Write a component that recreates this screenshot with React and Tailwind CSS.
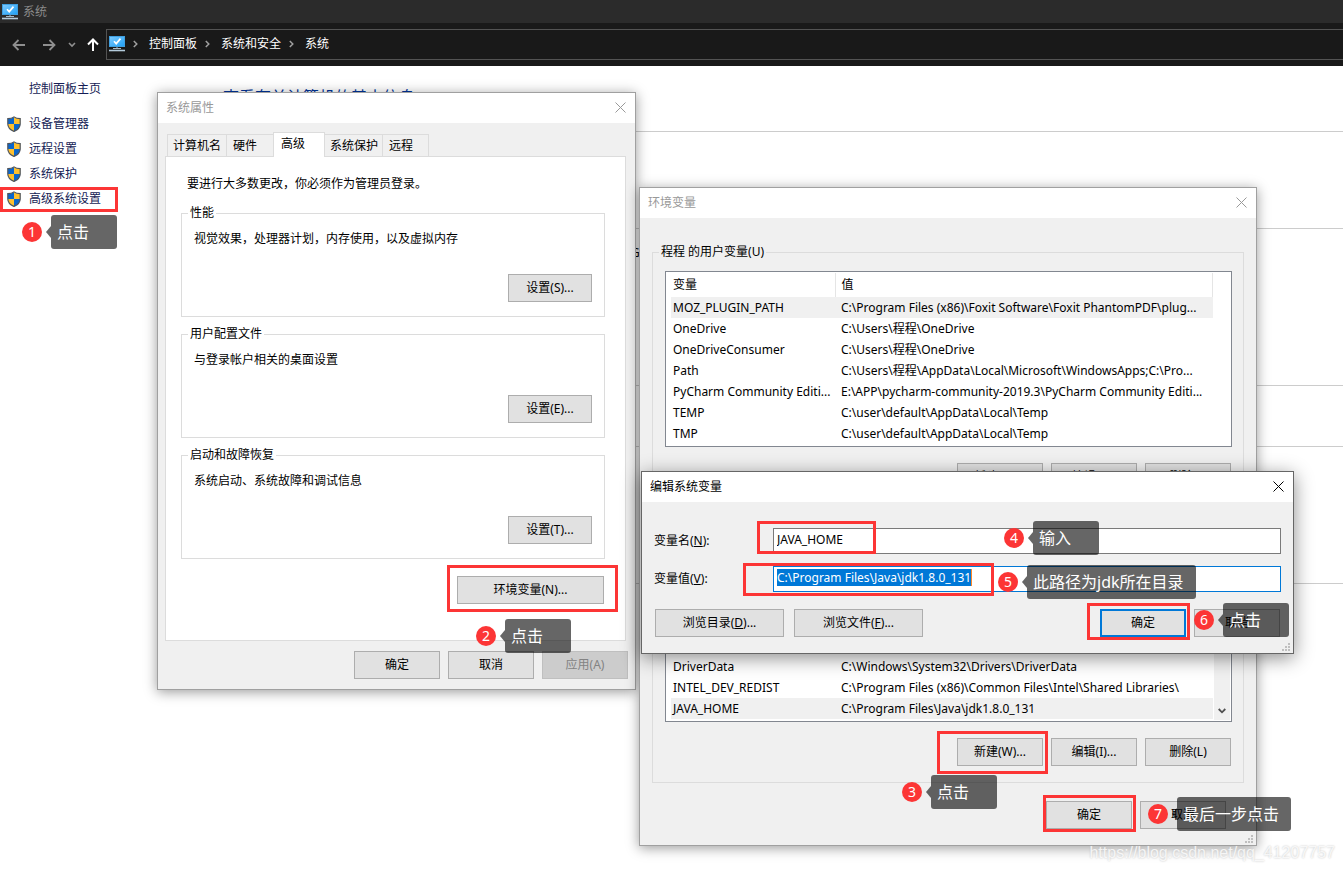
import React, { useState } from 'react';

const SIDE_LINKS = ['设备管理器', '远程设置', '系统保护', '高级系统设置'];

const CRUMBS = ['控制面板', '系统和安全', '系统'];

const TABS = [
    { label: '计算机名', className: 'h-[22px] w-[59px] border-l border-t pl-[5px]' },
    { label: '硬件', className: 'h-[22px] w-[47px] border-l border-t pl-1.5' },
    { label: '高级', active: true, className: 'z-10 -mb-px h-[25px] w-[52px] border-x border-t bg-white pb-0.5 pl-[7px]' },
    { label: '系统保护', className: 'h-[22px] w-[57px] border-t pl-[5px]' },
    { label: '远程', className: 'h-[22px] w-[47px] border-x border-t pl-1.5' },
];

const SETTINGS = [
    { title: '性能', text: '视觉效果，处理器计划，内存使用，以及虚拟内存', button: '设置(S)...' },
    { title: '用户配置文件', text: '与登录帐户相关的桌面设置', button: '设置(E)...' },
    { title: '启动和故障恢复', text: '系统启动、系统故障和调试信息', button: '设置(T)...' },
];

const USER_VARS = [
    { name: 'MOZ_PLUGIN_PATH', value: 'C:\\Program Files (x86)\\Foxit Software\\Foxit PhantomPDF\\plug...' },
    { name: 'OneDrive', value: 'C:\\Users\\程程\\OneDrive' },
    { name: 'OneDriveConsumer', value: 'C:\\Users\\程程\\OneDrive' },
    { name: 'Path', value: 'C:\\Users\\程程\\AppData\\Local\\Microsoft\\WindowsApps;C:\\Pro...' },
    { name: 'PyCharm Community Editi...', value: 'E:\\APP\\pycharm-community-2019.3\\PyCharm Community Editi...' },
    { name: 'TEMP', value: 'C:\\user\\default\\AppData\\Local\\Temp' },
    { name: 'TMP', value: 'C:\\user\\default\\AppData\\Local\\Temp' },
];

const SYSTEM_VARS = [
    { name: 'DriverData', value: 'C:\\Windows\\System32\\Drivers\\DriverData' },
    { name: 'INTEL_DEV_REDIST', value: 'C:\\Program Files (x86)\\Common Files\\Intel\\Shared Libraries\\' },
    { name: 'JAVA_HOME', value: 'C:\\Program Files\\Java\\jdk1.8.0_131' },
];

// Red frames around the controls to click
const FRAMES = [
    'left-0 top-[187px] h-[25px] w-[118px]',
    'left-[447px] top-[565px] h-[47px] w-[171px]',
    'left-[937px] top-[731px] h-[43px] w-[111px]',
    'left-[757px] top-[521px] h-[33px] w-[119px]',
    'left-[743px] top-[563px] h-[33px] w-[251px]',
    'left-[1087px] top-[603px] h-[37px] w-[103px]',
    'left-[1043px] top-[795px] h-[37px] w-[93px]',
];

const STEPS = [
    { text: '点击', className: 'left-[22px] top-[215px]' },
    { text: '点击', className: 'left-[476px] top-[619px]' },
    { text: '点击', className: 'left-[902px] top-[775px]' },
    { text: '输入', className: 'left-[1004px] top-[521px]' },
    { text: '此路径为jdk所在目录', className: 'left-[998px] top-[565px]' },
    { text: '点击', className: 'left-[1194px] top-[603px]' },
    { text: '最后一步点击', className: 'left-[1148px] top-[797px]' },
];

const MonitorIcon = () => (
    <svg width="16" height="16" viewBox="0 0 16 16" className="shrink-0">
        <defs>
            <linearGradient id="screen" x1="0" y1="0" x2="1" y2="1">
                <stop offset="0" stopColor="#7fcbff" />
                <stop offset="1" stopColor="#1ea0f5" />
            </linearGradient>
        </defs>
        <rect x="0.5" y="0.5" width="15" height="10" fill="url(#screen)" stroke="#3f9fe0" />
        <path d="M5 5.2 7.2 7.6 11.5 2.6" fill="none" stroke="#fff" strokeWidth="1.7" />
        <path d="M8 11v1.4M4 12.5h8" stroke="#a9bac6" strokeWidth="1" />
        <path d="M0 14.5h16" stroke="#b4cbdb" strokeWidth="1.6" />
    </svg>
);

const ShieldIcon = () => (
    <svg width="14" height="16" viewBox="0 0 14 16" className="shrink-0">
        <defs>
            <clipPath id="shield">
                <path d="M7 .9C8.6 2.2 10.7 2.700 13.200 2.700V8c0 3.400-2.700 5.900-6.200 7.400C3.500 13.900.8 11.400.8 8V2.700C3.300 2.700 5.400 2.200 7 .9Z" />
            </clipPath>
        </defs>
        <g clipPath="url(#shield)">
            <path d="M0 0h7v8H0zM7 8h7v8H7z" fill="#0b66cc" />
            <path d="M7 0h7v8H7zM0 8h7v8H0z" fill="#ffc02e" />
        </g>
        <path
            d="M7 .9C8.600 2.200 10.700 2.700 13.200 2.700V8c0 3.400-2.700 5.900-6.200 7.400C3.500 13.900.8 11.400.8 8V2.700C3.300 2.700 5.400 2.200 7 .9Z"
            fill="none"
            stroke="#50555c"
            strokeWidth="1.200"
        />
    </svg>
);

const ChevronIcon = () => (
    <svg width="5" height="8" viewBox="0 0 5 8" className="shrink-0">
        <path d="M.8 1 3.800 4 .8 7" fill="none" stroke="#a0a0a0" strokeWidth="1.500" />
    </svg>
);

const GripIcon = () => (
    <svg width="9" height="9" viewBox="0 0 9 9" className="absolute bottom-0.5 right-[3px]">
        <path d="M7 1h2v2H7zM4 4h2v2H4zM7 4h2v2H7zM1 7h2v2H1zM4 7h2v2H4zM7 7h2v2H7z" fill="#bfbfbf" />
    </svg>
);

const TitleBar = ({ title, active }) => (
    <header
        className={`flex h-[30px] items-center justify-between bg-white pl-2 pr-[9px] ${active ? 'text-black' : 'text-[#999]'}`}
    >
        <h2>{title}</h2>
        <button aria-label="关闭" className="pb-0.5">
            <svg width="11" height="11" viewBox="0 0 11 11" className="block">
                <path d="M.5.5l10 10M10.500.5l-10 10" stroke="currentColor" strokeWidth="1" />
            </svg>
        </button>
    </header>
);

const Button = ({ children, className = 'w-[86px] border border-[#adadad] bg-[#e1e1e1]', disabled }) => (
    <button disabled={disabled} className={`h-7 shrink-0 ${className}`}>
        {children}
    </button>
);

const VarList = ({ rows, selected, header, scroll }) => (
    <div className="flex h-44 justify-between border border-[#828790] bg-white pl-[5px]">
        <div className="flex flex-col justify-end pb-0.5">
            <table className="w-[542px] table-fixed text-left">
                <colgroup>
                    <col className="w-[164px]" />
                    <col />
                </colgroup>
                {header && (
                    <thead>
                        <tr className="h-6">
                            <th className="border-r border-[#e5e5e5] pl-0.5 font-normal">变量</th>
                            <th className="border-r border-[#e5e5e5] pl-1.5 font-normal">值</th>
                        </tr>
                    </thead>
                )}
                <tbody>
                    {rows.map((row) => (
                        <tr key={row.name} className={`h-[21px] ${row.name === selected ? 'bg-[#f0f0f0]' : ''}`}>
                            <td className="whitespace-nowrap pl-0.5">{row.name}</td>
                            <td className="whitespace-nowrap pl-1.5">{row.value}</td>
                        </tr>
                    ))}
                </tbody>
            </table>
        </div>
        {scroll && (
            <div className="mb-px mr-px flex w-4 items-end justify-center bg-[#f0f0f0] pb-1.5">
                <svg width="8" height="6" viewBox="0 0 8 6">
                    <path d="M.7 1 4 4.300 7.300 1" fill="none" stroke="#505050" strokeWidth="1.800" />
                </svg>
            </div>
        )}
    </div>
);

const VarGroup = ({ legend, children }) => (
    <fieldset className="border border-[#dcdcdc]">
        <legend className="ml-1.5 px-0.5">{legend}</legend>
        <div className="pb-4 pl-3 pr-[11px] pt-[11px]">
            {children}
            <div className="mt-4 flex justify-end gap-2 pr-px">
                <Button>新建(W)...</Button>
                <Button>编辑(I)...</Button>
                <Button>删除(L)</Button>
            </div>
        </div>
    </fieldset>
);

const SystemPage = () => (
    <>
        <header className="flex h-[23px] items-center gap-[5px] bg-[#2b2b2b] pl-0.5 text-[#8c8c8c]">
            <MonitorIcon />
            <h1>系统</h1>
        </header>
        <nav className="flex h-[43px] items-center bg-[#191919] pl-3 text-white">
            <svg width="14" height="12" viewBox="0 0 14 12">
                <path d="M13 6H1.500M6.500 1l-5 5 5 5" fill="none" stroke="#8f8f8f" strokeWidth="1.800" />
            </svg>
            <svg width="14" height="12" viewBox="0 0 14 12" className="ml-4">
                <path d="M1 6h11.500M7.500 1l5 5-5 5" fill="none" stroke="#8f8f8f" strokeWidth="1.800" />
            </svg>
            <svg width="8" height="6" viewBox="0 0 8 6" className="ml-3">
                <path d="M1 1l3 3 3-3" fill="none" stroke="#8f8f8f" strokeWidth="1.600" />
            </svg>
            <svg width="12" height="14" viewBox="0 0 12 14" className="ml-[11px]">
                <path d="M6 13V1.500M1 6.500l5-5 5 5" fill="none" stroke="#fff" strokeWidth="2" />
            </svg>
            <div className="ml-[7px] flex h-[31px] flex-1 items-center border-y border-l border-[#535353] pb-0.5 pl-0.5">
                <MonitorIcon />
                {CRUMBS.map((crumb) => (
                    <span key={crumb} className="flex items-center">
                        <span className="flex w-6 justify-center pr-1">
                            <ChevronIcon />
                        </span>
                        <a href="#">{crumb}</a>
                    </span>
                ))}
            </div>
        </nav>
        <div className="flex">
            <aside className="w-[223px] shrink-0 pt-[15px] text-[#151c55]">
                <a href="#" className="ml-[29px] block">控制面板主页</a>
                <ul className="mt-3.5">
                    {SIDE_LINKS.map((link) => (
                        <li key={link}>
                            <a href="#" className="flex h-[25px] items-center gap-2 pl-[7px]">
                                <ShieldIcon />
                                <span className="pt-px">{link}</span>
                            </a>
                        </li>
                    ))}
                </ul>
            </aside>
            <main className="flex-1">
                <h2 className="h-[65px] pt-[19px] text-base text-[#003399]">查看有关计算机的基本信息</h2>
                <section className="h-[97px] border-t border-[#ccc]" />
                <section className="h-[157px] border-t border-[#ccc] pl-[408px] pt-4">G</section>
                <section className="h-[61px] border-t border-[#ccc]" />
                <section className="h-[137px] border-t border-[#ccc]" />
                <section className="border-t border-[#ccc]" />
            </main>
        </div>
    </>
);

const SystemProperties = () => (
    <section className="absolute left-[157px] top-[92px] w-[479px] border border-[#a0a0a0] bg-[#f0f0f0] shadow-[0_2px_12px_rgba(0,0,0,0.4)]">
        <TitleBar title="系统属性" />
        <div className="pb-2.5 pl-[7px] pr-[9px] pt-[9px]">
            <div role="tablist" className="flex items-end pl-0.5">
                {TABS.map((tab) => (
                    <button
                        key={tab.label}
                        role="tab"
                        aria-selected={Boolean(tab.active)}
                        className={`relative border-[#dcdcdc] text-left ${tab.className}`}
                    >
                        {tab.label}
                    </button>
                ))}
            </div>
            <div className="flex flex-col border border-[#dcdcdc] bg-white pb-9 pl-[15px] pr-5 pt-[19px]">
                <p className="pl-1.5">要进行大多数更改，你必须作为管理员登录。</p>
                <div className="mt-[13px] flex flex-col gap-[9px]">
                    {SETTINGS.map((item) => (
                        <fieldset key={item.title} className="border border-[#dcdcdc]">
                            <legend className="ml-1.5 px-0.5">{item.title}</legend>
                            <div className="flex flex-col px-3 pb-3.5 pt-2.5">
                                <p>{item.text}</p>
                                <Button className="mt-[27px] w-[84px] self-end border border-[#adadad] bg-[#e1e1e1]">
                                    {item.button}
                                </Button>
                            </div>
                        </fieldset>
                    ))}
                </div>
                <div className="mt-[17px] flex justify-end pr-px">
                    <Button className="w-[147px] border border-[#adadad] bg-[#e1e1e1]">环境变量(N)...</Button>
                </div>
            </div>
        </div>
        <footer className="flex justify-end gap-2 pb-2.5 pr-[7px]">
            <Button>确定</Button>
            <Button>取消</Button>
            <Button disabled className="w-[86px] border border-[#bfbfbf] bg-[#ccc] text-[#838383]">应用(A)</Button>
        </footer>
    </section>
);

const EnvironmentVariables = () => (
    <section className="absolute left-[639px] top-[187px] w-[618px] border border-[#a0a0a0] bg-[#f0f0f0] shadow-[0_2px_12px_rgba(0,0,0,0.4)]">
        <TitleBar title="环境变量" />
        <div className="flex flex-col gap-[11px] px-3 pt-[26px]">
            <VarGroup legend="程程 的用户变量(U)">
                <VarList rows={USER_VARS} selected="MOZ_PLUGIN_PATH" header />
            </VarGroup>
            <VarGroup legend="系统变量(S)">
                <VarList rows={SYSTEM_VARS} selected="JAVA_HOME" scroll />
            </VarGroup>
        </div>
        <footer className="flex justify-end gap-2 pb-4 pr-[30px] pt-[18px]">
            <Button>确定</Button>
            <Button>取消</Button>
        </footer>
        <GripIcon />
    </section>
);

const EditVariable = () => {
    const [name, setName] = useState('JAVA_HOME');
    const [value, setValue] = useState('C:\\Program Files\\Java\\jdk1.8.0_131');

    return (
        <section className="absolute left-[641px] top-[471px] w-[653px] border border-[#666] bg-[#f0f0f0] shadow-[0_4px_18px_rgba(0,0,0,0.45)]">
            <TitleBar title="编辑系统变量" active />
            <form className="px-3 pb-4 pt-[26px]" onSubmit={(e) => e.preventDefault()}>
                <div className="flex items-center">
                    <label htmlFor="var-name" className="w-[119px]">
                        变量名(<u>N</u>):
                    </label>
                    <div className="h-[26px] flex-1 border border-[#7a7a7a] bg-white px-[3px] pt-0.5">
                        <input
                            id="var-name"
                            value={name}
                            onChange={(e) => setName(e.target.value)}
                            className="block h-[17px] w-full outline-none"
                        />
                    </div>
                </div>
                <div className="mt-3 flex items-center">
                    <label htmlFor="var-value" className="w-[119px]">
                        变量值(<u>V</u>):
                    </label>
                    <div className="h-[26px] flex-1 border border-[#0078d7] bg-white px-[3px] pt-0.5">
                        <input
                            id="var-value"
                            value={value}
                            onChange={(e) => setValue(e.target.value)}
                            className="field-sizing-content block h-[17px] border-r border-[#ff8728] bg-[#0078d7] text-white outline-none"
                        />
                    </div>
                </div>
                <div className="mt-[17px] flex gap-2 px-px">
                    <Button className="mr-0.5 w-[129px] border border-[#adadad] bg-[#e1e1e1]">
                        浏览目录(<u>D</u>)...
                    </Button>
                    <Button className="mr-auto w-[129px] border border-[#adadad] bg-[#e1e1e1]">
                        浏览文件(<u>F</u>)...
                    </Button>
                    <Button className="w-[86px] border-2 border-[#0078d7] bg-[#e1e1e1]">确定</Button>
                    <Button>取消</Button>
                </div>
            </form>
            <GripIcon />
        </section>
    );
};

const Step = ({ number, text, className }) => (
    <div className={`absolute flex items-center ${className}`}>
        <span className="flex size-5 items-center justify-center rounded-full bg-[#fc3535] text-sm leading-none text-white">
            {number}
        </span>
        <svg width="5" height="12" viewBox="0 0 5 12" className="ml-1">
            <path d="M5 0v12L0 6Z" fill="#000" fillOpacity="0.6" />
        </svg>
        <span className="h-[34px] min-w-[66px] whitespace-nowrap rounded-[3px] bg-black/60 pl-1.5 pr-3 text-base leading-[34px] text-white">
            {text}
        </span>
    </div>
);

export default function App() {
    return (
        <div className="relative min-h-screen overflow-hidden bg-white font-['Noto_Sans','Noto_Sans_CJK_SC',sans-serif] text-xs text-black">
            <SystemPage />
            <SystemProperties />
            <EnvironmentVariables />
            <EditVariable />
            {FRAMES.map((frame) => (
                <div key={frame} className={`pointer-events-none absolute border-3 border-[#fc3535] ${frame}`} />
            ))}
            {STEPS.map((step, index) => (
                <Step key={step.className} number={index + 1} text={step.text} className={step.className} />
            ))}
            <p className="absolute bottom-1.5 right-2 font-['Liberation_Sans',sans-serif] text-base text-white/80 [text-shadow:0_0_2px_#bbb]">
                https://blog.csdn.net/qq_41207757
            </p>
        </div>
    );
}
